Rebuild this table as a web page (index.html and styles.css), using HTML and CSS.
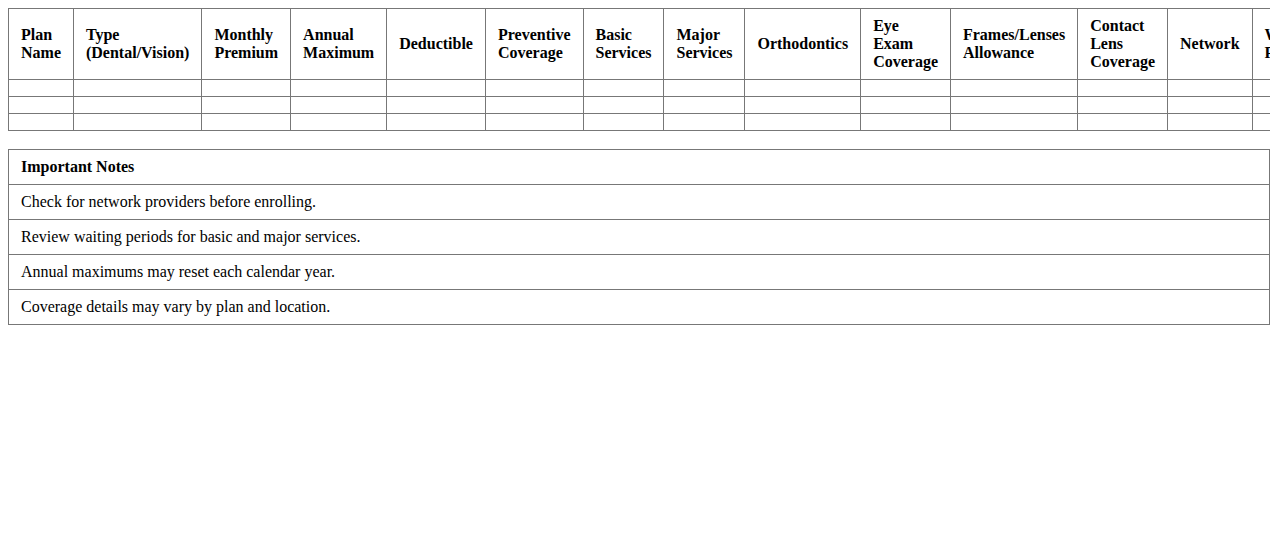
FILE: index.html
```html
<!DOCTYPE html>
<html lang="en">
<head>
<meta charset="utf-8">
<title>Dental and Vision Plans</title>
<link rel="stylesheet" href="styles.css">
</head>
<body>
<table class="grid plans">
  <thead>
    <tr>
      <th>Plan Name</th>
      <th>Type (Dental/Vision)</th>
      <th>Monthly Premium</th>
      <th>Annual Maximum</th>
      <th>Deductible</th>
      <th>Preventive Coverage</th>
      <th>Basic Services</th>
      <th>Major Services</th>
      <th>Orthodontics</th>
      <th>Eye Exam Coverage</th>
      <th>Frames/Lenses Allowance</th>
      <th>Contact Lens Coverage</th>
      <th>Network</th>
      <th>Waiting Periods</th>
    </tr>
  </thead>
  <tbody>
    <tr><td></td><td></td><td></td><td></td><td></td><td></td><td></td><td></td><td></td><td></td><td></td><td></td><td></td><td></td></tr>
    <tr><td></td><td></td><td></td><td></td><td></td><td></td><td></td><td></td><td></td><td></td><td></td><td></td><td></td><td></td></tr>
    <tr><td></td><td></td><td></td><td></td><td></td><td></td><td></td><td></td><td></td><td></td><td></td><td></td><td></td><td></td></tr>
  </tbody>
</table>
<table class="grid notes">
  <thead>
    <tr><th>Important Notes</th></tr>
  </thead>
  <tbody>
    <tr><td>Check for network providers before enrolling.</td></tr>
    <tr><td>Review waiting periods for basic and major services.</td></tr>
    <tr><td>Annual maximums may reset each calendar year.</td></tr>
    <tr><td>Coverage details may vary by plan and location.</td></tr>
  </tbody>
</table>
</body>
</html>
```
FILE: styles.css
```css
html, body {
  background: #ffffff;
}
body {
  margin: 8px;
  font-family: "Liberation Serif", "Times New Roman", serif;
  font-size: 16px;
  color: #000000;
}
.grid {
  border-collapse: collapse;
  width: 100%;
}
.grid th,
.grid td {
  border: 1px solid #777777;
  padding: 8px 12px;
  text-align: left;
  vertical-align: middle;
}
.grid th {
  font-weight: bold;
}
.plans {
  margin-bottom: 18px;
}
```
